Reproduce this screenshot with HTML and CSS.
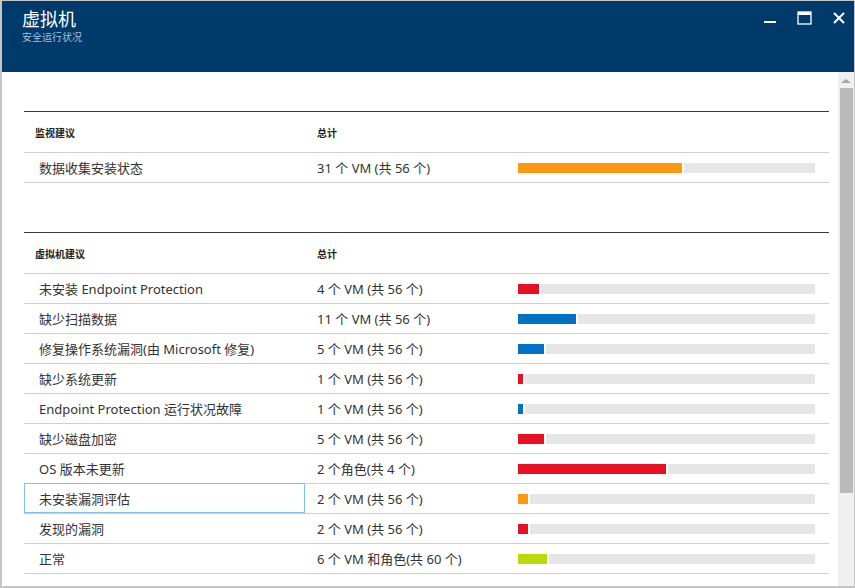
FILE: index.html
```html
<!DOCTYPE html>
<html lang="zh-CN">
<head>
<meta charset="utf-8">
<title>虚拟机</title>
<link rel="stylesheet" href="styles.css">
</head>
<body>
<div class="window">
  <header class="titlebar">
    <div class="titles">
      <div class="title">虚拟机</div>
      <div class="subtitle">安全运行状况</div>
    </div>
    <div class="controls">
      <svg class="ctl" width="14" height="14" viewBox="0 0 14 14"><rect x="1" y="10" width="12" height="2" fill="#fff"/></svg>
      <svg class="ctl" width="15" height="14" viewBox="0 0 15 14"><rect x="1" y="1" width="13" height="12" fill="none" stroke="#fff" stroke-width="1.3"/><rect x="1" y="1" width="13" height="3" fill="#fff"/></svg>
      <svg class="ctl" width="14" height="14" viewBox="0 0 14 14"><path d="M2 2 L12 12 M12 2 L2 12" stroke="#fff" stroke-width="2"/></svg>
    </div>
  </header>
  <div class="body">
    <main class="content">
      <section class="table t1">
        <div class="row head"><div class="c1">监视建议</div><div class="c2">总计</div><div class="c3"></div></div>
        <div class="row"><div class="c1">数据收集安装状态</div><div class="c2">31 个 VM (共 56 个)</div><div class="c3"><div class="bar"><div class="fill orange" style="width:164px"></div><div class="track"></div></div></div></div>
      </section>
      <section class="table t2">
        <div class="row head"><div class="c1">虚拟机建议</div><div class="c2">总计</div><div class="c3"></div></div>
        <div class="row"><div class="c1">未安装 Endpoint Protection</div><div class="c2">4 个 VM (共 56 个)</div><div class="c3"><div class="bar"><div class="fill red" style="width:21px"></div><div class="track"></div></div></div></div>
        <div class="row"><div class="c1">缺少扫描数据</div><div class="c2">11 个 VM (共 56 个)</div><div class="c3"><div class="bar"><div class="fill blue" style="width:58px"></div><div class="track"></div></div></div></div>
        <div class="row"><div class="c1">修复操作系统漏洞(由 Microsoft 修复)</div><div class="c2">5 个 VM (共 56 个)</div><div class="c3"><div class="bar"><div class="fill blue" style="width:26px"></div><div class="track"></div></div></div></div>
        <div class="row"><div class="c1">缺少系统更新</div><div class="c2">1 个 VM (共 56 个)</div><div class="c3"><div class="bar"><div class="fill red" style="width:5px"></div><div class="track"></div></div></div></div>
        <div class="row"><div class="c1">Endpoint Protection 运行状况故障</div><div class="c2">1 个 VM (共 56 个)</div><div class="c3"><div class="bar"><div class="fill blue" style="width:5px"></div><div class="track"></div></div></div></div>
        <div class="row"><div class="c1">缺少磁盘加密</div><div class="c2">5 个 VM (共 56 个)</div><div class="c3"><div class="bar"><div class="fill red" style="width:26px"></div><div class="track"></div></div></div></div>
        <div class="row"><div class="c1">OS 版本未更新</div><div class="c2">2 个角色(共 4 个)</div><div class="c3"><div class="bar"><div class="fill red" style="width:148px"></div><div class="track"></div></div></div></div>
        <div class="row selected"><div class="c1">未安装漏洞评估</div><div class="c2">2 个 VM (共 56 个)</div><div class="c3"><div class="bar"><div class="fill orange" style="width:10px"></div><div class="track"></div></div></div></div>
        <div class="row"><div class="c1">发现的漏洞</div><div class="c2">2 个 VM (共 56 个)</div><div class="c3"><div class="bar"><div class="fill red" style="width:10px"></div><div class="track"></div></div></div></div>
        <div class="row"><div class="c1">正常</div><div class="c2">6 个 VM 和角色(共 60 个)</div><div class="c3"><div class="bar"><div class="fill lime" style="width:29px"></div><div class="track"></div></div></div></div>
      </section>
    </main>
    <div class="scrollbar">
      <div class="arrow"></div>
      <div class="thumb"></div>
    </div>
  </div>
</div>
</body>
</html>
```

FILE: styles.css
```css
html, body {
  margin: 0;
  padding: 0;
  background: #fff;
}
body {
  font-family: "Noto Sans", "Noto Sans CJK SC", sans-serif;
  color: #333;
}
.window {
  box-sizing: border-box;
  width: 855px;
  height: 588px;
  border: 1px solid #c6c6c6;
  border-left-width: 2px;
  border-bottom-width: 2px;
  display: flex;
  flex-direction: column;
  overflow: hidden;
}
.titlebar {
  height: 71px;
  flex: none;
  background: #003a6b;
  display: flex;
  justify-content: space-between;
  align-items: flex-start;
}
.titles {
  padding: 8px 0 0 20px;
}
.title {
  font-family: "Noto Sans CJK SC", sans-serif;
  font-size: 18px;
  line-height: 18px;
  color: #fff;
}
.subtitle {
  font-family: "Noto Sans CJK SC", sans-serif;
  font-size: 10px;
  line-height: 10px;
  margin-top: 5px;
  color: #a8bfd6;
}
.controls {
  display: flex;
  gap: 20px;
  padding: 10px 8px 0 0;
}
.ctl {
  display: block;
}
.body {
  flex: 1;
  display: flex;
  min-height: 0;
}
.content {
  flex: 1;
  padding: 39px 9px 0 22px;
}
.scrollbar {
  width: 16px;
  flex: none;
  background: #f0f0f0;
  display: flex;
  flex-direction: column;
  align-items: center;
  padding-top: 7px;
}
.arrow {
  width: 0;
  height: 0;
  border-left: 5px solid transparent;
  border-right: 5px solid transparent;
  border-bottom: 4px solid #a6a6a6;
  margin-bottom: 5px;
}
.thumb {
  width: 13px;
  height: 405px;
  background: #b9b9b9;
}
.table {
  border-top: 1px solid #3a3a3a;
}
.t2 {
  margin-top: 49px;
}
.row {
  box-sizing: border-box;
  display: grid;
  grid-template-columns: 281px 213px 310px;
  height: 30px;
  align-items: center;
  border-bottom: 1px solid #cfcfcf;
  font-size: 13px;
  position: relative;
}
.row.head {
  height: 41px;
  font-size: 10px;
  font-weight: bold;
  color: #222;
}
.row.head .c1 {
  padding-left: 11px;
}
.c1 {
  padding-left: 15px;
  white-space: nowrap;
}
.c2 {
  padding-left: 12px;
  white-space: nowrap;
}
.c3 {
  padding-right: 13px;
}
.row.selected::before {
  content: "";
  position: absolute;
  left: 0;
  top: -1px;
  width: 281px;
  height: 30px;
  box-sizing: border-box;
  border: 1px solid #7cc2ea;
  pointer-events: none;
}
.bar {
  display: flex;
  height: 10px;
}
.fill {
  flex: none;
  box-sizing: content-box;
  border-right: 2px solid #fff;
}
.track {
  flex: 1;
  background: #e6e6e6;
}
.orange { background: #ff9712; }
.red { background: #e81123; }
.blue { background: #0072c6; }
.lime { background: #bad80a; }
```
